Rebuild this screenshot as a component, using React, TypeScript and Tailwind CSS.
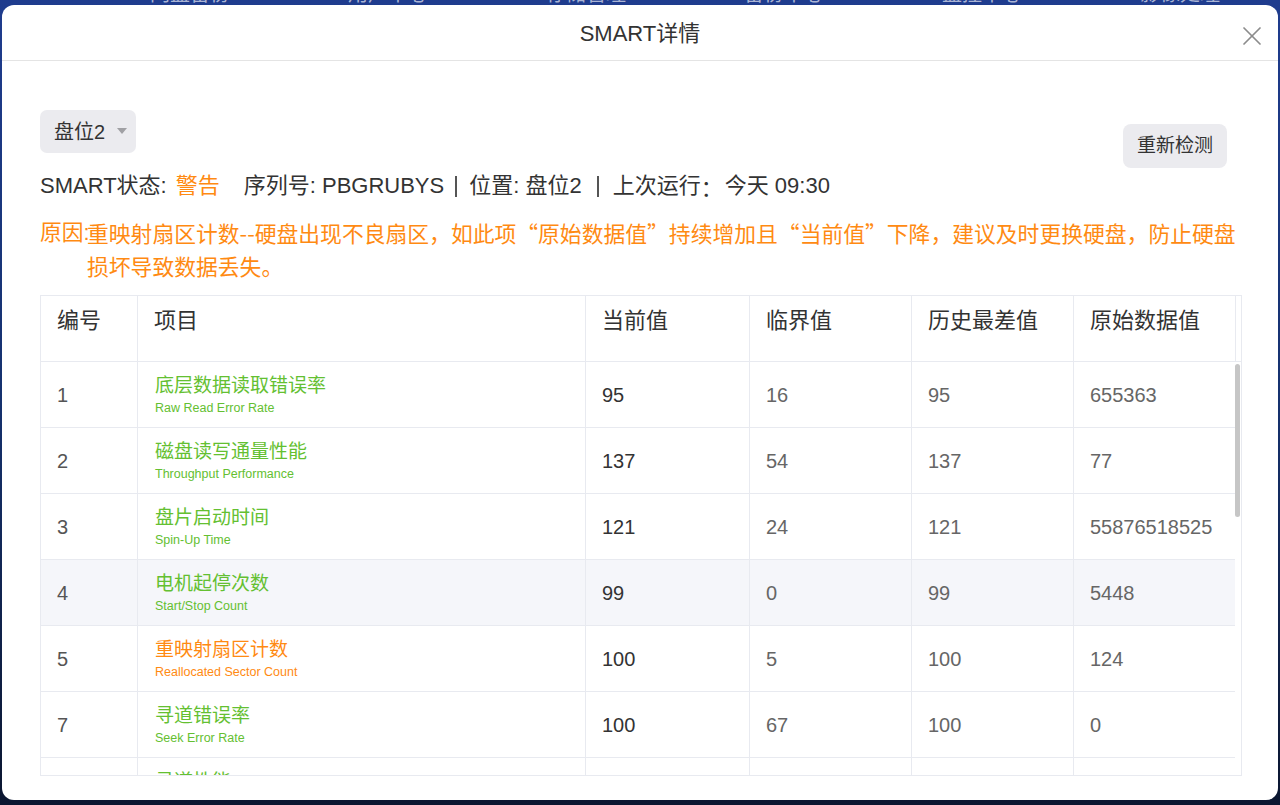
import React from 'react';
import { X } from 'lucide-react';

type Row = {
  id: number;
  name: string;
  en: string;
  cur: string;
  limit: string;
  worst: string;
  raw: string;
  warn?: boolean;
};

const ROWS: Row[] = [
  { id: 1, name: '底层数据读取错误率', en: 'Raw Read Error Rate', cur: '95', limit: '16', worst: '95', raw: '655363' },
  { id: 2, name: '磁盘读写通量性能', en: 'Throughput Performance', cur: '137', limit: '54', worst: '137', raw: '77' },
  { id: 3, name: '盘片启动时间', en: 'Spin-Up Time', cur: '121', limit: '24', worst: '121', raw: '55876518525' },
  { id: 4, name: '电机起停次数', en: 'Start/Stop Count', cur: '99', limit: '0', worst: '99', raw: '5448' },
  { id: 5, name: '重映射扇区计数', en: 'Reallocated Sector Count', cur: '100', limit: '5', worst: '100', raw: '124', warn: true },
  { id: 7, name: '寻道错误率', en: 'Seek Error Rate', cur: '100', limit: '67', worst: '100', raw: '0' },
  { id: 8, name: '寻道性能', en: 'Seek Time Performance', cur: '140', limit: '20', worst: '140', raw: '40' },
];

const NAV = ['网盘备份', '用户中心', '存储管理', '备份中心', '监控中心', '影像处理'];

const cols = 'grid grid-cols-[97px_448px_164px_162px_162px_162px]';
const cjk = "font-['Noto_Sans_CJK_SC',sans-serif]";

const Sep = ({ className = '' }: { className?: string }) => (
  <span className={`w-[22px] flex justify-center ${className}`}>
    <span className="w-[2px] h-[21px] bg-[#555]" />
  </span>
);

const App: React.FC = () => {
  return (
    <div className="h-[805px] overflow-hidden bg-gradient-to-b from-[#1f3c8e] via-[#15316e] to-[#0b1630] font-['Liberation_Sans','Noto_Sans_CJK_SC',sans-serif]">
      {/* page behind the dialog, only its nav bottom peeks out */}
      <div className="h-[5px] overflow-hidden">
        <div className="flex -mt-[18px] pl-[150px] gap-[118px] text-[20px] leading-[24px] text-[#aab4d4]">
          {NAV.map(n => (
            <span key={n}>{n}</span>
          ))}
        </div>
      </div>

      <div className="mx-[2px] h-[795px] bg-white rounded-[12px] flex flex-col">
        {/* Header */}
        <div className="h-[56px] border-b border-[#e4e4e4] flex items-center justify-center relative">
          <span className="text-[22px] text-[#333] mt-[1px]">SMART详情</span>
          <X className="absolute right-[10px] top-[15px] w-[32px] h-[32px] text-[#8c8c8c]" strokeWidth={1.3} />
        </div>

        <div className="pl-[38px] pr-[36px] pt-[49px] flex flex-col">
          {/* Top row */}
          <div className="flex items-start justify-between">
            <div className="h-[43px] w-[96px] bg-[#ebebef] rounded-[7px] flex items-center pl-[14px] gap-[12px] text-[20px] text-[#333]">
              <span>盘位2</span>
              <svg width="10" height="6" viewBox="0 0 10 6" className="mt-[-2px]">
                <path d="M0 0 L10 0 L5 6 Z" fill="#a0a0a4" />
              </svg>
            </div>
            <button className="mt-[14px] mr-[15px] h-[44px] w-[104px] bg-[#ebebef] rounded-[8px] text-[19px] text-[#333]">
              重新检测
            </button>
          </div>

          {/* Status line */}
          <div className="mt-[4px] h-[28px] leading-[28px] text-[22px] text-[#333] whitespace-nowrap flex items-center">
            <span>SMART状态:</span>
            <span className="ml-[9px] text-[#ff8a12]">警告</span>
            <span className="ml-[24px]">序列号: PBGRUBYS</span>
            <Sep className="ml-[1px]" />
            <span className="ml-[2px]">位置: 盘位2</span>
            <Sep className="ml-[5px]" />
            <span className="ml-[4px]">上次运行</span>
            <span className={cjk}>：</span>
            <span className="ml-[2px]">今天 09:30</span>
          </div>

          {/* Reason */}
          <div className="mt-[16px] flex text-[21.8px] leading-[33px] text-[#ff8a12]">
            <span className="shrink-0 w-[47px] whitespace-nowrap">原因:</span>
            <span className={`flex-1 ${cjk}`}>
              重映射扇区计数--硬盘出现不良扇区，如此项“原始数据值”持续增加且“当前值”下降，建议及时更换硬盘，防止硬盘损坏导致数据丢失。
            </span>
          </div>

          {/* Table */}
          <div className="mt-[13px] border border-[#e8eaf0] h-[481px] flex flex-col">
            <div className="flex h-[66px] border-b border-[#e8eaf0] shrink-0">
              <div className={`${cols} text-[22px] text-[#333] leading-[28px]`}>
                {['编号', '项目', '当前值', '临界值', '历史最差值', '原始数据值'].map(h => (
                  <div key={h} className="border-r border-[#e8eaf0] pl-[16px] pt-[11px]">
                    {h}
                  </div>
                ))}
              </div>
              <div className="w-[6px]" />
            </div>

            <div className="flex flex-1 overflow-hidden">
              <div className="flex-1 overflow-hidden">
                {ROWS.map(r => (
                  <div
                    key={r.id}
                    className={`${cols} h-[66px] border-b border-[#e8eaf0] ${r.id === 4 ? 'bg-[#f5f6fa]' : 'bg-white'}`}
                  >
                    <div className="border-r border-[#e8eaf0] pl-[16px] flex items-center text-[20px] text-[#555]">{r.id}</div>
                    <div className="border-r border-[#e8eaf0] pl-[17px] flex flex-col justify-center">
                      <div className={`text-[19px] leading-[26px] ${r.warn ? 'text-[#ff8a12]' : 'text-[#64c031]'}`}>{r.name}</div>
                      <div className={`text-[12.5px] leading-[18px] ${r.warn ? 'text-[#ff8a12]' : 'text-[#64c031]'}`}>{r.en}</div>
                    </div>
                    {[r.cur, r.limit, r.worst, r.raw].map((v, i) => (
                      <div
                        key={i}
                        className={`border-r border-[#e8eaf0] pl-[16px] flex items-center text-[20px] ${i === 0 ? 'text-[#333]' : 'text-[#666]'}`}
                      >
                        {v}
                      </div>
                    ))}
                  </div>
                ))}
              </div>
              {/* scrollbar gutter */}
              <div className="w-[6px] pt-[2px]">
                <div className="h-[153px] w-[5px] rounded-full bg-[#c6c6c6]" />
              </div>
            </div>
          </div>
        </div>
      </div>
    </div>
  );
};

export default App;
